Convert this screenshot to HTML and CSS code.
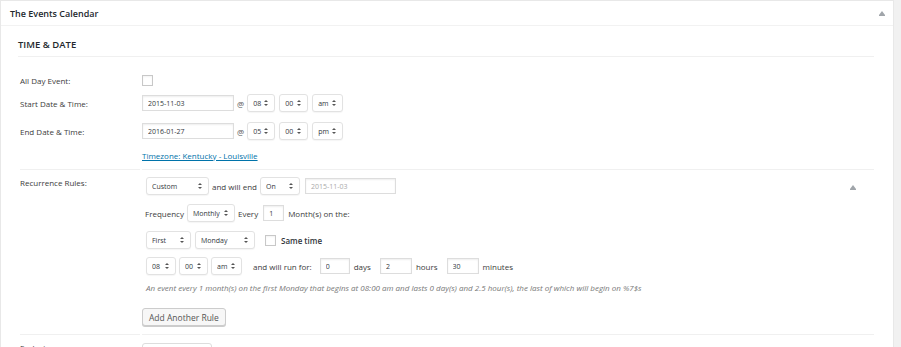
FILE: index.html
```html
<!DOCTYPE html>
<html lang="en">

<head>
    <meta charset="utf-8" />
    <title>The Events Calendar</title>
    <link rel="stylesheet" href="styles.css">
</head>

<body>
    <div class="postbox">
        <div class="postbox-head">
            <h2>The Events Calendar</h2>
            <span class="toggle-arrow"></span>
        </div>
        <div class="inside">
            <h3 class="section-title">Time &amp; Date</h3>

            <div class="group group-dates">
                <div class="label">
                    <div class="line line-allday">All Day Event:</div>
                    <div class="line line-start">Start Date &amp; Time:</div>
                    <div class="line line-end">End Date &amp; Time:</div>
                </div>
                <div class="value">
                    <div class="line line-allday"><input type="checkbox" class="check"></div>
                    <div class="line line-start">
                        <input type="text" class="date" value="2015-11-03">
                        <span class="at">@</span>
                        <span class="sel sel-hour"><select><option>08</option></select></span>
                        <span class="sel sel-min"><select><option>00</option></select></span>
                        <span class="sel sel-mer"><select><option>am</option></select></span>
                    </div>
                    <div class="line line-end">
                        <input type="text" class="date" value="2016-01-27">
                        <span class="at">@</span>
                        <span class="sel sel-hour"><select><option>05</option></select></span>
                        <span class="sel sel-min"><select><option>00</option></select></span>
                        <span class="sel sel-mer"><select><option>pm</option></select></span>
                    </div>
                    <div class="line line-tz"><a href="#">Timezone: Kentucky - Louisville</a></div>
                </div>
            </div>

            <div class="group group-recurrence">
                <div class="label"><div class="rec-label">Recurrence Rules:</div></div>
                <div class="value rec-value">
                    <div class="rec-row rec-row-1">
                        <span class="sel sel-type"><select><option>Custom</option></select></span>
                        <span class="txt">and will end</span>
                        <span class="sel sel-end"><select><option>On</option></select></span>
                        <input type="text" class="date date-disabled" value="2015-11-03" disabled>
                        <span class="toggle-arrow rec-arrow"></span>
                    </div>
                    <div class="rec-row rec-row-2">
                        <span class="txt">Frequency</span>
                        <span class="sel sel-freq"><select><option>Monthly</option></select></span>
                        <span class="txt">Every</span>
                        <input type="text" class="num num-every" value="1">
                        <span class="txt">Month(s) on the:</span>
                    </div>
                    <div class="rec-row rec-row-3">
                        <span class="sel sel-first"><select><option>First</option></select></span>
                        <span class="sel sel-day"><select><option>Monday</option></select></span>
                        <input type="checkbox" class="check check-same">
                        <span class="txt strong">Same time</span>
                    </div>
                    <div class="rec-row rec-row-4">
                        <span class="sel sel-hour2"><select><option>08</option></select></span>
                        <span class="sel sel-min2"><select><option>00</option></select></span>
                        <span class="sel sel-mer2"><select><option>am</option></select></span>
                        <span class="txt run-for">and will run for:</span>
                        <input type="text" class="num num-days" value="0">
                        <span class="txt">days</span>
                        <input type="text" class="num num-hours" value="2">
                        <span class="txt">hours</span>
                        <input type="text" class="num num-minutes" value="30">
                        <span class="txt">minutes</span>
                    </div>
                    <div class="rec-desc">An event every 1 month(s) on the first Monday that begins at 08:00 am and lasts 0 day(s) and 2.5 hour(s), the last of which will begin on %7$s</div>
                    <button class="button">Add Another Rule</button>
                </div>
            </div>

            <div class="group group-exclusions">
                <div class="label"><div class="excl-label">Exclusions:</div></div>
                <div class="value"><span class="excl-box"></span></div>
            </div>
        </div>
    </div>
</body>

</html>
```

FILE: styles.css
```css
html {
    font-family: "Open Sans", "Liberation Sans", sans-serif;
    background: #f1f1f1;
}

body {
    margin: 0;
    width: 901px;
    height: 347px;
    overflow: hidden;
    color: #444;
    font-size: 8px;
}

.postbox {
    width: 892px;
    height: 360px;
    background: #fff;
    border: 1px solid #e8e8e8;
    border-bottom: none;
}

.postbox-head {
    display: flex;
    align-items: center;
    height: 24px;
    border-bottom: 1px solid #f2f2f2;
    padding: 0 8px 0 9px;
}

.postbox-head h2 {
    margin: 0;
    flex: 1;
    font-size: 9px;
    font-weight: 600;
    color: #23282d;
}

.toggle-arrow {
    display: inline-block;
    width: 6px;
    height: 5px;
    position: relative;
}

.toggle-arrow::before {
    content: "";
    position: absolute;
    left: 0;
    top: 0;
    border-left: 3px solid transparent;
    border-right: 3px solid transparent;
    border-bottom: 4px solid #a0a5aa;
}

.toggle-arrow::after {
    content: "";
    position: absolute;
    left: 0;
    top: 4px;
    width: 6px;
    height: 1px;
    background: #a0a5aa;
}

.inside {
    padding: 0 19px 0 17px;
}

.section-title {
    margin: 0;
    height: 30px;
    line-height: 37px;
    border-bottom: 1px solid #f0f0f0;
    font-size: 9.5px;
    font-weight: 600;
    text-transform: uppercase;
    color: #23282d;
}

.group {
    display: grid;
    grid-template-columns: 120px 1fr;
    column-gap: 2px;
    margin-left: 2px;
}

.group > .label,
.group > .value {
    border-bottom: 1px solid #f0f0f0;
}

.group-exclusions > .label,
.group-exclusions > .value {
    border-bottom: none;
}

.line {
    display: flex;
    align-items: center;
    height: 18px;
}

.group-dates .label,
.group-dates .value {
    padding-top: 14px;
    padding-bottom: 5px;
}

.line-start {
    margin-top: 5px;
}

.line-end {
    margin-top: 10px;
}

.line-tz {
    margin-top: 6px;
}

.line-tz a {
    color: #0073aa;
    font-size: 8px;
}

.label {
    color: #3c3c3c;
}

input[type="text"] {
    box-sizing: border-box;
    height: 16px;
    margin: 0;
    padding: 0 5px;
    border: 1px solid #ddd;
    border-radius: 0;
    box-shadow: inset 0 1px 2px rgba(0, 0, 0, 0.07);
    font-family: inherit;
    font-size: 7px;
    color: #32373c;
    background: #fff;
}

.date {
    width: 92px;
}

.date-disabled {
    width: 91px;
    color: #aaa !important;
    background: #fff;
}

.check {
    box-sizing: border-box;
    appearance: none;
    -webkit-appearance: none;
    width: 11px;
    height: 11px;
    margin: 0;
    border: 1px solid #c8c8c8;
    background: #fff;
    box-shadow: inset 0 1px 2px rgba(0, 0, 0, 0.05);
}

.at {
    margin: 0 3px 0 3px;
    color: #555;
    font-size: 8px;
}

.sel {
    position: relative;
    display: inline-block;
    height: 18px;
    margin-right: 4px;
}

.sel select {
    box-sizing: border-box;
    appearance: none;
    -webkit-appearance: none;
    width: 100%;
    height: 18px;
    margin: 0;
    padding: 1px 0 0 5px;
    border: 1px solid #e2e2e2;
    border-radius: 3px;
    background: #fff;
    box-shadow: 0 1px 1px rgba(0, 0, 0, 0.04);
    font-family: inherit;
    font-size: 7px;
    color: #32373c;
}

.sel::before,
.sel::after {
    content: "";
    position: absolute;
    right: 7px;
    border-left: 2px solid transparent;
    border-right: 2px solid transparent;
    pointer-events: none;
}

.sel::before {
    top: 6px;
    border-bottom: 2px solid #555;
}

.sel::after {
    top: 10px;
    border-top: 2px solid #555;
}

.sel-hour { width: 28px; }
.sel-min { width: 29px; }
.sel-mer { width: 31px; }

.rec-label {
    padding-top: 7px;
    line-height: 12px;
}

.rec-value {
    padding-top: 7px;
    padding-bottom: 8px;
}

.rec-row {
    display: flex;
    align-items: center;
    height: 18px;
    padding-left: 4px;
}

.rec-row-2 { margin-top: 9px; padding-left: 3px; }
.rec-row-3 { margin-top: 9px; }
.rec-row-4 { margin-top: 8px; }

.txt {
    font-size: 8px;
    color: #3c3c3c;
    margin-right: 3px;
}

.strong {
    font-weight: 600;
    color: #32373c;
}

.rec-row .sel { margin-right: 3px; }

.sel-type { width: 63px; }
.sel-end { width: 40px; margin-right: 5px !important; }
.sel-freq { width: 48px; }
.sel-first { width: 45px; margin-right: 4px !important; }
.sel-day { width: 60px; margin-right: 10px !important; }
.sel-hour2 { width: 30px; }
.sel-min2 { width: 29px; }
.sel-mer2 { width: 31px; margin-right: 11px !important; }

.rec-arrow {
    margin-left: auto;
    margin-right: 18px;
    margin-top: 2px;
}

.num {
    margin-right: 4px !important;
}

.num-every { width: 21px; margin-left: 2px !important; }
.num-days { width: 30px; margin-left: 5px !important; }
.num-hours { width: 32px; margin-left: 6px !important; }
.num-minutes { width: 32px; margin-left: 6px !important; }

.check-same {
    margin-right: 5px;
}

.rec-desc {
    margin: 7px 0 0 4px;
    height: 12px;
    line-height: 12px;
    font-size: 8px;
    font-style: italic;
    color: #777;
    white-space: nowrap;
}

.button {
    box-sizing: border-box;
    display: block;
    height: 18px;
    margin-top: 14px;
    padding: 0 6px;
    border: 1px solid #ccc;
    border-radius: 3px;
    background: #f7f7f7;
    box-shadow: 0 1px 0 #ccc;
    font-family: inherit;
    font-size: 8.5px;
    color: #555;
}

.excl-label {
    padding-top: 7px;
}

.excl-box {
    display: block;
    box-sizing: border-box;
    width: 70px;
    height: 18px;
    margin-top: 8px;
    border: 1px solid #ddd;
    border-radius: 3px;
}
```
